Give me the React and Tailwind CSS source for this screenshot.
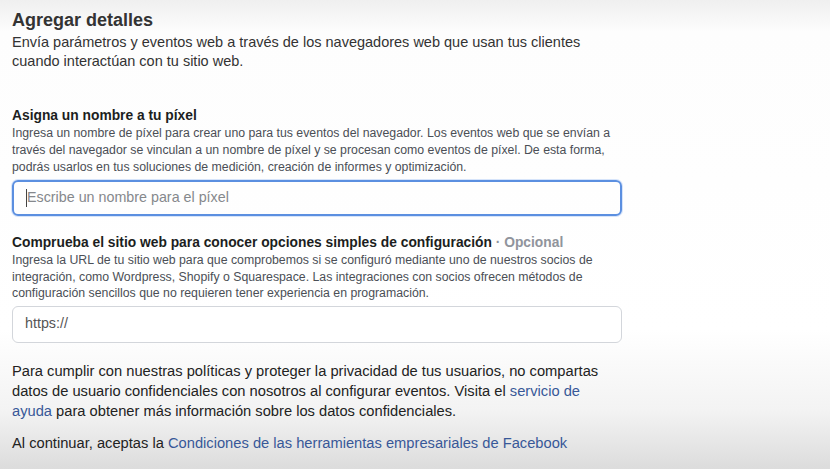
import React from "react";

function Field({ title, optional, children, input, descLeading }) {
    return (
        <div>
            <h3 className="text-[13.8px] leading-[18px] font-bold text-[#1c1e21]">
                {title}
                {optional && (
                    <span className="font-bold text-[#90949c]"> · {optional}</span>
                )}
            </h3>
            <p className={`text-[12.3px] text-[#4b4f56] ${descLeading}`}>{children}</p>
            {input}
        </div>
    );
}

export default function App() {
    return (
        <div
            className="min-h-[469px] w-full bg-[linear-gradient(to_bottom,#efefef_0px,#fdfdfd_32px,#ffffff_330px,#f3f3f3_410px,#dcdcdc_469px)] px-3 pt-[9px] text-[#1c1e21]"
            style={{ fontFamily: '"Liberation Sans", Arial, sans-serif' }}
        >
            <h1 className="text-[18px] leading-[22px] font-bold text-[#333]">
                Agregar detalles
            </h1>
            <p className="mt-[2px] text-[14.5px] leading-[19px] text-[#333]">
                Envía parámetros y eventos web a través de los navegadores web que usan tus clientes
                <br />
                cuando interactúan con tu sitio web.
            </p>

            <div className="mt-[36px] flex w-[610px] flex-col">
                <Field
                    title="Asigna un nombre a tu píxel"
                    descLeading="leading-[17px]"
                    input={
                        <div className="mt-[4px] flex h-[36px] items-center rounded-[6px] border-2 border-[#5b8fe0] px-3 shadow-[0_0_0_1px_#d6e4fa]">
                            <span className="h-[18px] w-px bg-[#444]" />
                            <span className="text-[14.3px] text-[#85888c]">
                                Escribe un nombre para el píxel
                            </span>
                        </div>
                    }
                >
                    Ingresa un nombre de píxel para crear uno para tus eventos del navegador. Los eventos web que se envían a
                    <br />
                    través del navegador se vinculan a un nombre de píxel y se procesan como eventos de píxel. De esta forma,
                    <br />
                    podrás usarlos en tus soluciones de medición, creación de informes y optimización.
                </Field>

                <div className="mt-[18px]">
                    <Field
                        title="Comprueba el sitio web para conocer opciones simples de configuración"
                        optional="Opcional"
                        descLeading="leading-[16.5px]"
                        input={
                            <div className="mt-[4px] flex h-[37px] items-center rounded-[6px] border border-[#d3d6db] bg-white px-3">
                                <span className="text-[14.3px] text-[#555]">https://</span>
                            </div>
                        }
                    >
                        Ingresa la URL de tu sitio web para que comprobemos si se configuró mediante uno de nuestros socios de
                        <br />
                        integración, como Wordpress, Shopify o Squarespace. Las integraciones con socios ofrecen métodos de
                        <br />
                        configuración sencillos que no requieren tener experiencia en programación.
                    </Field>
                </div>

                <p className="mt-[18px] text-[14.7px] leading-[20px] text-[#222]">
                    Para cumplir con nuestras políticas y proteger la privacidad de tus usuarios, no compartas
                    <br />
                    datos de usuario confidenciales con nosotros al configurar eventos. Visita el{" "}
                    <a className="text-[#385898]">servicio de</a>
                    <br />
                    <a className="text-[#385898]">ayuda</a> para obtener más información sobre los datos confidenciales.
                </p>

                <p className="mt-[12px] text-[14.7px] leading-[20px] text-[#222]">
                    Al continuar, aceptas la{" "}
                    <a className="text-[#385898]">
                        Condiciones de las herramientas empresariales de Facebook
                    </a>
                </p>
            </div>
        </div>
    );
}
